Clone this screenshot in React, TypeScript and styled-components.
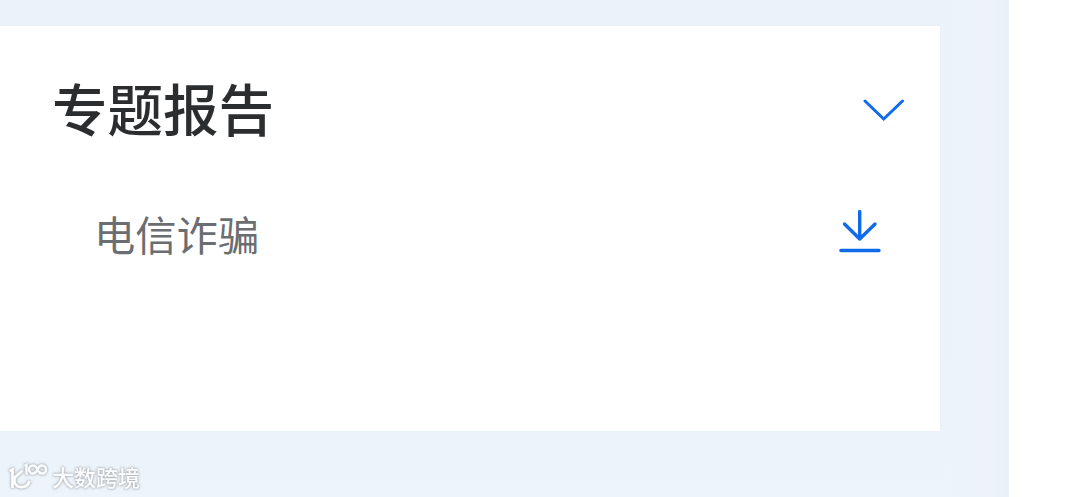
import React from 'react'
import styled, { createGlobalStyle } from 'styled-components'

const GlobalStyle = createGlobalStyle`
  * {
    box-sizing: border-box;
  }

  body {
    margin: 0;
    background: #ffffff;
    font-family: "Noto Sans CJK SC", sans-serif;
  }
`

const Page = styled.main`
  width: 1008.5px;
  height: 497px;
  padding-top: 26px;
  overflow: hidden;
  background:
    linear-gradient(90deg, transparent 92%, #edf3fb 96%, #eef3fb 98%, #e8f0f8 100%),
    linear-gradient(180deg, #ebf2f8 0%, #ebf2f7 50%, #ebf3fb 90%, #edf4fa 100%);
`

const Card = styled.section`
  width: 939.5px;
  height: 405px;
  padding: 44px 34.5px 0 52px;
  background: #ffffff;
  box-shadow: 0 0 2px #e6eef3;
`

const Row = styled.div<{ $inset?: boolean }>`
  display: flex;
  align-items: center;
  justify-content: space-between;
  height: ${(props) => (props.$inset ? '84px' : '80px')};
  margin-top: ${(props) => (props.$inset ? '39px' : '0')};
  padding: ${(props) => (props.$inset ? '0 24px 0 42px' : '0')};
`

const Title = styled.h2`
  margin: 0;
  padding-bottom: 6px;
  color: #2b2d2e;
  font-size: 55.5px;
  font-weight: 500;
  line-height: 80px;
`

const ItemName = styled.span`
  padding-top: 4px;
  color: #6b6e71;
  font-size: 41.3px;
  font-weight: 400;
  line-height: 60px;
`

const IconButton = styled.button`
  display: flex;
  padding: 0;
  border: 0;
  background: none;
  color: #0f6bec;
`

const Watermark = styled.footer`
  display: flex;
  align-items: center;
  gap: 4px;
  margin-top: 28px;
  padding-left: 8px;
  height: 34px;
  color: #fbfdff;
  filter: drop-shadow(0 0 1px #a9aeb2) drop-shadow(0 0 1px #c2c6ca);
`

const Brand = styled.span`
  font-size: 22px;
  font-weight: 500;
  line-height: 32px;
`

const items = [{ id: 1, name: '电信诈骗' }]

function ChevronIcon() {
  return (
    <svg width="42" height="24" viewBox="0 0 42 24" fill="none" stroke="currentColor" strokeWidth="3" strokeLinecap="round">
      <path d="M2 3L20.700 21L39.500 3" />
    </svg>
  )
}

function DownloadIcon() {
  return (
    <svg width="42" height="44" viewBox="0 0 42 44" fill="none" stroke="currentColor" strokeWidth="3.4" strokeLinecap="round" strokeLinejoin="round">
      <path d="M20.700 2.500V30M5.500 15L20.700 30L36 15M1.900 41.500H40" />
    </svg>
  )
}

function LogoIcon() {
  return (
    <svg width="40" height="30" viewBox="0 0 40 30" fill="none" stroke="currentColor" strokeWidth="2.8">
      <path d="M1.500 10L4.500 8.500V27M14.500 9.500L9.500 14A6.500 6.500 0 0 0 13.500 26C17.500 26 20.500 23.500 21.500 20" />
      <path d="M16.500 5L18.500 3.800V14" strokeWidth="2.4" />
      <path d="M29.500 8.500C28.500 6 27 4.500 25 4.500A4 4 0 0 0 25 12.500C27 12.500 28.500 11 29.500 8.500C30.500 6 32 4.500 34 4.500A4 4 0 0 1 34 12.500C32 12.500 30.500 11 29.500 8.500Z" strokeWidth="2.4" />
    </svg>
  )
}

export default function App() {
  return (
    <>
      <GlobalStyle />
      <Page>
        <Card>
          <Row>
            <Title>专题报告</Title>
            <IconButton aria-label="展开">
              <ChevronIcon />
            </IconButton>
          </Row>
          {items.map((item) => {
            return (
              <Row key={item.id} $inset>
                <ItemName>{item.name}</ItemName>
                <IconButton aria-label="下载">
                  <DownloadIcon />
                </IconButton>
              </Row>
            )
          })}
        </Card>
        <Watermark>
          <LogoIcon />
          <Brand>大数跨境</Brand>
        </Watermark>
      </Page>
    </>
  )
}
